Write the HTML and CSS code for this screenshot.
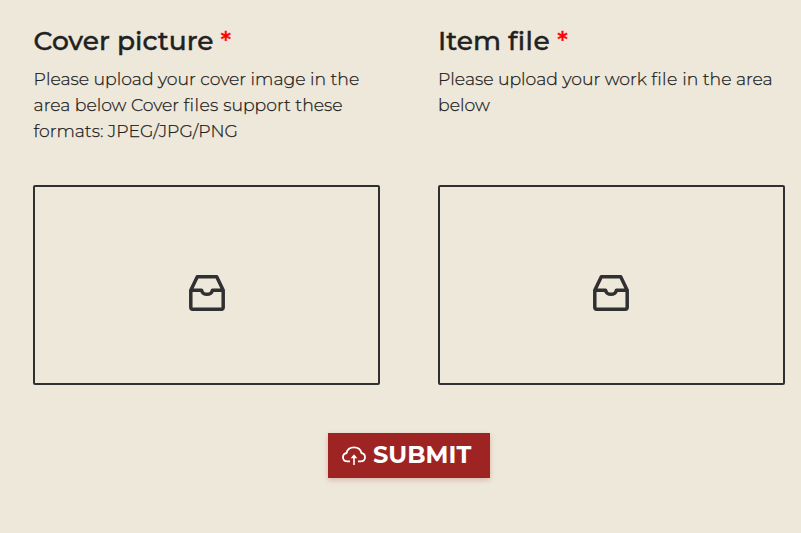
FILE: index.html
```html
<!DOCTYPE html>
<html lang="en">
<head>
<meta charset="utf-8">
<title>Upload item</title>
<link rel="stylesheet" href="styles.css">
</head>
<body>
<form class="upload">
  <div class="columns">
    <section class="field cover">
      <h2 class="title">Cover picture <span class="required">*</span></h2>
      <p class="hint">Please upload your cover image in the area below Cover <span class="loose">files</span> support these formats: JPEG/JPG/PNG</p>
      <div class="dropzone">
        <svg class="inbox" viewBox="0 0 36 36"><path d="M8.3 1.8H27.7L34.2 15.2V32.3Q34.2 34.2 32.3 34.2H3.7Q1.8 34.2 1.8 32.3V15.2ZM1.8 15.2H12.6C13.1 20.7 22.9 20.7 23.4 15.2H34.2"/></svg>
      </div>
    </section>
    <section class="field">
      <h2 class="title">Item <span class="loose">file</span> <span class="required">*</span></h2>
      <p class="hint">Please upload your work <span class="loose">file</span> in the area below</p>
      <div class="dropzone file-zone">
        <svg class="inbox" viewBox="0 0 36 36"><path d="M8.3 1.8H27.7L34.2 15.2V32.3Q34.2 34.2 32.3 34.2H3.7Q1.8 34.2 1.8 32.3V15.2ZM1.8 15.2H12.6C13.1 20.7 22.9 20.7 23.4 15.2H34.2"/></svg>
      </div>
    </section>
  </div>
  <button class="submit" type="button">
    <svg class="cloud" viewBox="0 0 24 20"><path class="outline" d="M8 15.3H5.5C2.8 15.3 1 13.5 1 11.2C1 9 2.5 7.4 4.5 7C5.3 3.6 8.2 1.3 12 1.3C15.8 1.3 18.7 3.6 19.5 7C21.5 7.4 23 9 23 11.2C23 13.5 21.2 15.3 18.5 15.3H16"/><path class="arrow" d="M12 8.3L15.3 12.3H12.8V19H11.2V12.3H8.7Z"/></svg>
    <span class="label">SUBMIT</span>
  </button>
</form>
</body>
</html>
```

FILE: styles.css
```css
* { box-sizing: border-box; }
body {
  margin: 0;
  background: #eee8da;
  color: #212121;
  font-family: Montserrat, Inter, sans-serif;
  font-variant-ligatures: none;
}
.upload {
  height: 533px;
  padding: 25px 16px 0 33px;
  display: flex;
  flex-direction: column;
  align-items: center;
}
.columns { display: grid; grid-template-columns: 347px 347px; gap: 58px; }
.field { display: flex; flex-direction: column; }
.title {
  margin: 0 0 9px;
  font-size: 26.5px;
  line-height: 32px;
  font-weight: 500;
  color: #212121;
  -webkit-text-stroke: 0.4px currentColor;
}
.required { color: #f00; }
.loose { letter-spacing: 0.4px; }
.hint {
  margin: 0;
  height: 119px;
  font-size: 17.25px;
  line-height: 26px;
  font-weight: 300;
  -webkit-text-stroke: 0.25px currentColor;
}
.cover .title, .cover .hint { margin-left: 0.6px; }
.dropzone {
  height: 200px;
  border: 2px solid #303033;
  border-radius: 2px;
  display: flex;
  align-items: center;
  justify-content: center;
  padding-top: 16px;
}
.file-zone { padding-right: 1px; }
.inbox {
  width: 36px;
  height: 36px;
  fill: none;
  stroke: #303033;
  stroke-width: 3.5;
  stroke-linejoin: round;
}
.submit {
  margin: 48px 0 0;
  width: 162px;
  height: 45px;
  padding: 0 0 0 14px;
  border: 0;
  background: #9e2424;
  color: #fff;
  box-shadow: 0 2px 5px rgba(158, 36, 36, 0.25);
  display: flex;
  align-items: center;
  gap: 7px;
  font-family: inherit;
}
.cloud { width: 24px; height: 20px; flex: none; margin-top: 1px; }
.outline { fill: none; stroke: #fff; stroke-width: 1.8; }
.arrow { fill: #fff; }
.label { font-size: 24px; line-height: 30px; font-weight: 700; margin-top: -2px; }
```
